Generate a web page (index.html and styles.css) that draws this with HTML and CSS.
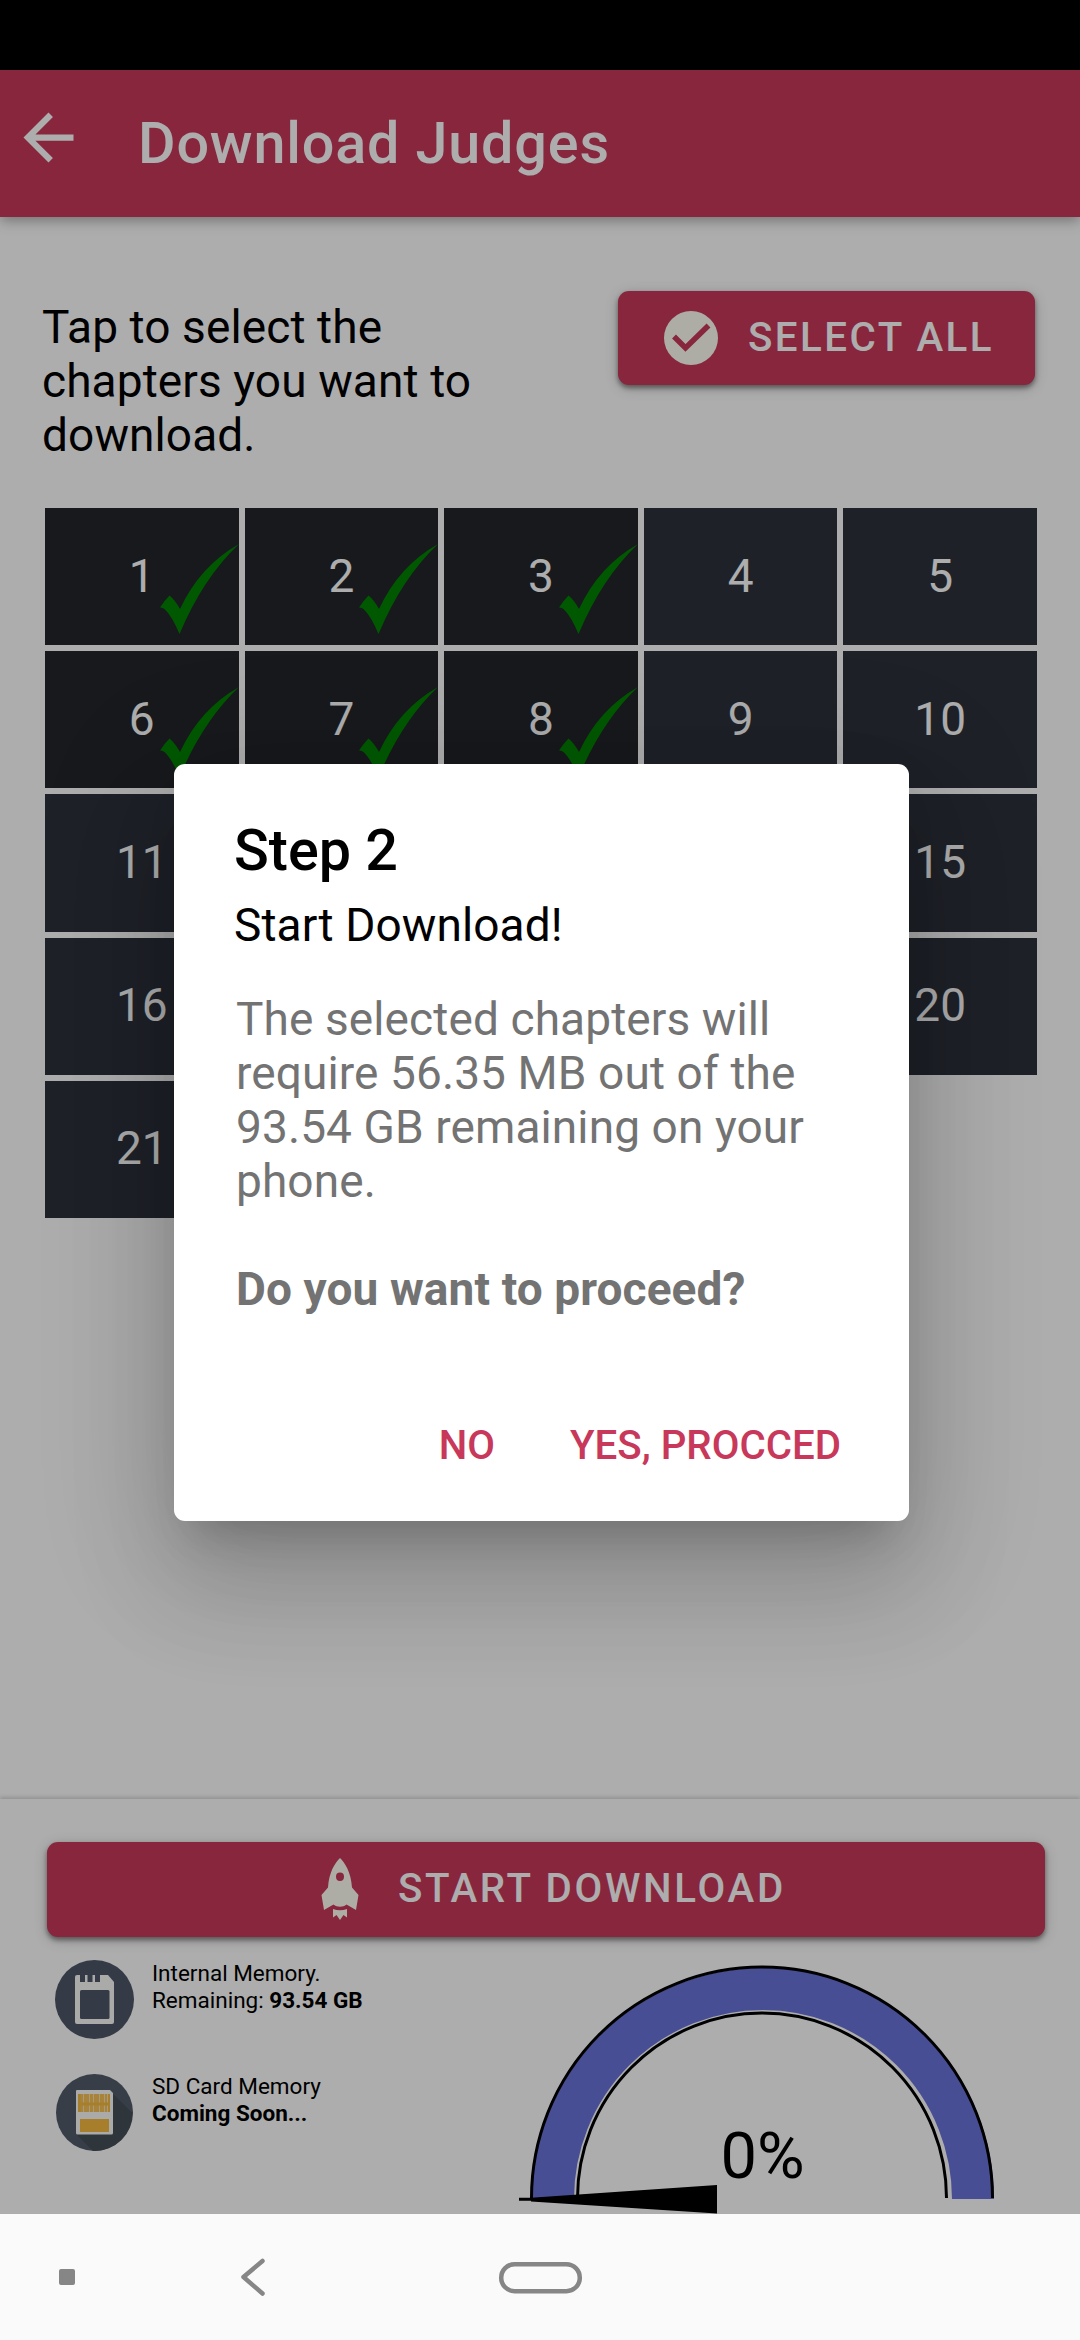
FILE: index.html
```html
<!DOCTYPE html>
<html lang="en">
<head>
<meta charset="utf-8">
<title>Download Judges</title>
<link rel="stylesheet" href="styles.css">
</head>
<body>
<div class="screen">
  <div class="status-bar"></div>
  <div class="app">
    <header class="app-bar">
      <svg class="back-icon" viewBox="0 0 24 24"><path d="M20 11H7.83l5.59-5.59L12 4l-8 8 8 8 1.41-1.41L7.83 13H20v-2z"/></svg>
      <h1 class="app-title">Download Judges</h1>
    </header>

    <main class="content">
      <div class="intro">
        <p class="hint">Tap to select the<br>chapters you want to<br>download.</p>
        <button class="button select-all">
          <svg class="check-circle" viewBox="0 0 54 54"><circle cx="27" cy="27" r="27"/><path class="check-cut" d="M10 25.500L21.500 37 44.500 14.500"/></svg>
          <span>SELECT ALL</span>
        </button>
      </div>

      <div class="chapters">
        <div class="chapter selected">1<svg class="tick" viewBox="0 0 79 90"><use href="#tick"/></svg></div>
        <div class="chapter selected">2<svg class="tick" viewBox="0 0 79 90"><use href="#tick"/></svg></div>
        <div class="chapter selected">3<svg class="tick" viewBox="0 0 79 90"><use href="#tick"/></svg></div>
        <div class="chapter">4</div>
        <div class="chapter">5</div>
        <div class="chapter selected">6<svg class="tick" viewBox="0 0 79 90"><use href="#tick"/></svg></div>
        <div class="chapter selected">7<svg class="tick" viewBox="0 0 79 90"><use href="#tick"/></svg></div>
        <div class="chapter selected">8<svg class="tick" viewBox="0 0 79 90"><use href="#tick"/></svg></div>
        <div class="chapter">9</div>
        <div class="chapter">10</div>
        <div class="chapter">11</div>
        <div class="chapter"></div>
        <div class="chapter"></div>
        <div class="chapter"></div>
        <div class="chapter">15</div>
        <div class="chapter">16</div>
        <div class="chapter"></div>
        <div class="chapter"></div>
        <div class="chapter"></div>
        <div class="chapter">20</div>
        <div class="chapter">21</div>
      </div>
    </main>

    <footer class="footer">
      <button class="button start">
        <svg class="rocket" viewBox="0 0 38 62">
          <path fill-rule="evenodd" d="M19 0C24 5 30 14 31 29.500L37.500 37 35 52 25.500 46.500C22 49.500 16 49.500 12.500 46.500L3 52 .5 37 7 29.500C8 14 14 5 19 0ZM19 14.500A4 4.200 0 1 0 19 22.900A4 4.200 0 1 0 19 14.500Z"/>
          <path d="M12 51Q19 53.500 26 51V59.500L22.500 57 19 62 15.500 57 12 59.500Z"/>
        </svg>
        <span>START DOWNLOAD</span>
      </button>

      <div class="info">
        <div class="storage">
          <div class="storage-row">
            <svg class="storage-icon" viewBox="0 0 79 79">
              <circle class="disc" cx="39.500" cy="39.500" r="39.500"/>
              <path class="card" d="M22 15H53L59 22V62Q59 64 57 64H22Q20 64 20 62V17Q20 15 22 15Z"/>
              <path class="disc" d="M25 15H30V22H25ZM32.500 15H37.500V22H32.500ZM40 15H45V22H40Z"/>
              <rect class="disc" x="25" y="30" width="29.500" height="29" rx="1.500"/>
            </svg>
            <p class="storage-text">Internal Memory.<br>Remaining: <b>93.54 GB</b></p>
          </div>
          <div class="storage-row">
            <svg class="storage-icon" viewBox="0 0 79 79">
              <circle class="disc-sd" cx="39.500" cy="39.500" r="38.500"/>
              <path class="disc-shade" d="M57 20L77.500 40A38.500 38.500 0 0 1 38 78L21 61Z"/>
              <path class="card" d="M22 17H55L58 20V60Q58 61.500 56.500 61.500H22.500Q21 61.500 21 60V18Q21 17 22 17Z"/>
              <path class="gold-light" d="M23 21H55V39H23Z"/>
              <path class="card-lines" d="M28.500 21V39M34.500 21V39M38.500 21V39M44.500 21V39M49.500 21V39M52.500 21V39"/>
              <path class="gold" d="M23 21H25.500V39H23ZM53.500 21H55V39H53.500ZM23 29.500H55V32.500H23ZM25 46H54V59H25Z"/>
            </svg>
            <p class="storage-text">SD Card Memory<br><b>Coming Soon...</b></p>
          </div>
        </div>
        <svg class="gauge" viewBox="519 1960 480 254">
          <path class="gauge-band" d="M553 2199A210 210 0 0 1 973 2199"/>
          <path class="gauge-line" d="M531.500 2198A230.500 231 0 0 1 992.500 2198"/>
          <path class="gauge-line" d="M577.500 2198A184.500 185 0 0 1 946.500 2198"/>
          <path class="gauge-needle" d="M519 2197.800H531L717 2185V2213.500L531 2201.500V2200.700H519Z"/>
          <text class="gauge-value" x="762.500" y="2178" text-anchor="middle">0%</text>
        </svg>
      </div>
    </footer>
    <div class="scrim">
      <section class="dialog" role="dialog">
        <h2 class="dialog-title">Step 2</h2>
        <p class="dialog-subtitle">Start Download!</p>
        <p class="dialog-body">The selected chapters will<br>require 56.35 MB out of the<br>93.54 GB remaining on your<br>phone.<br><br><b>Do you want to proceed?</b></p>
        <div class="dialog-actions"><span>NO</span><span>YES, PROCCED</span></div>
      </section>
    </div>
  </div>

  <nav class="nav-bar">
    <svg viewBox="0 0 1080 126">
      <rect class="nav-fill" x="59" y="55" width="16" height="16" rx="2"/>
      <path class="nav-stroke" d="M262.500 47L243.500 63 262.500 79.500" />
      <rect class="nav-stroke" x="501.200" y="50.200" width="78.600" height="27" rx="13.500"/>
    </svg>
  </nav>
</div>

<svg class="defs"><defs><path id="tick" d="M0 63.500Q5 56 9.500 51.500Q15 56 20 65Q40 22 79 0Q43 34 19.500 90Q12 72 4.500 65Q2 63 0 63.500Z"/></defs></svg>
</body>
</html>
```
FILE: styles.css
```css
* { box-sizing: border-box; }
body, h1, h2, p { margin: 0; }
body { font-family: Roboto, "Noto Sans", sans-serif; color: #000; }

.defs { display: none; }
.screen { width: 1080px; height: 2340px; display: flex; flex-direction: column; overflow: hidden; }
.status-bar { height: 70px; background: #000; }
.app { position: relative; height: 2144px; display: flex; flex-direction: column; background: #fff; overflow: hidden; }

.app-bar { height: 147px; display: flex; align-items: center; padding-left: 11px; background: #c8385b; box-shadow: 0 3px 13px rgba(0, 0, 0, .36); }
.back-icon { width: 75px; height: 75px; margin: 0 52px 12px 0; fill: #fff; }
.app-title { font-size: 57.500px; font-weight: 500; line-height: 67px; letter-spacing: .85px; color: #fff; }

.content { flex: 1; padding: 74px 43px 0 42px; }
.intro { display: flex; justify-content: space-between; height: 217px; }
.hint { padding-top: 9px; font-size: 46px; line-height: 54px; letter-spacing: .1px; }

.button { display: flex; align-items: center; justify-content: flex-start; border: 0; padding: 0; border-radius: 11px; background: #c8385b; color: #fff; font-family: inherit; font-size: 40.250px; font-weight: 500; line-height: 48px; letter-spacing: 2.500px; box-shadow: 0 3px 5px rgba(0, 0, 0, .42), 0 3px 14px rgba(0, 0, 0, .2); }
.button span { margin-bottom: 1px; }
.select-all { width: 417px; height: 94px; margin-right: 2px; padding-left: 46px; gap: 30px; }
.check-circle { width: 54px; height: 54px; fill: #fffff5; }
.check-cut { fill: none; stroke: #c8385b; stroke-width: 5.500; }

.chapters { display: grid; grid-template-columns: repeat(5, 1fr); grid-auto-rows: 137.200px; gap: 6px; margin: 0 0 0 3px; width: 992px; }
.chapter { position: relative; display: flex; align-items: center; justify-content: center; padding-bottom: 2px; background: #2d323c; color: #fff; font-size: 46px; line-height: 54px; }
.selected { background: #23262b; }
.tick { position: absolute; right: 0; top: 36px; width: 79px; height: 90px; fill: #008400; }

.footer { height: 415px; padding: 43px 35px 0 47px; background: #fff; box-shadow: 0 -2px 4px rgba(0, 0, 0, .16); }
.start { width: 998px; height: 95px; gap: 39px; padding-left: 274px; letter-spacing: 2.700px; }
.rocket { width: 38px; height: 62px; margin-bottom: 1px; fill: #fffff5; }
.info { display: flex; justify-content: space-between; padding: 23px 46px 0 8px; }
.storage { display: flex; flex-direction: column; gap: 34px; }
.storage-row { display: flex; gap: 18px; height: 79px; }
.storage-icon { width: 79px; height: 79px; }
.storage-text { font-size: 22.500px; line-height: 27px; }
.disc { fill: #4e5767; }
.disc-sd { fill: #525c69; }
.disc-shade { fill: #444e57; }
.card { fill: #fbfbf8; }
.gold { fill: #f6bb42; }
.gold-light { fill: #f6c356; }
.card-lines { fill: none; stroke: #fff; stroke-opacity: .55; stroke-width: 1; }
.gauge { width: 480px; height: 254px; }
.gauge-band { fill: none; stroke: #6a73da; stroke-width: 42; }
.gauge-line { fill: none; stroke: #000; stroke-width: 3; }
.gauge-value { font-size: 65px; }

.scrim { position: absolute; inset: 0; padding: 694px 0 0 174px; background: rgba(0, 0, 0, .32); }
.dialog { width: 735px; height: 757px; padding: 54px 62px 0 60px; border-radius: 11px; background: #fff; box-shadow: 0 66px 104px 8px rgba(0, 0, 0, .12), 0 28px 41px -19px rgba(0, 0, 0, .2), 0 24px 126px 22px rgba(0, 0, 0, .12); }
.dialog-title { font-size: 57.500px; font-weight: 500; line-height: 66px; }
.dialog-subtitle { margin-top: 14px; font-size: 46px; line-height: 54px; letter-spacing: .1px; }
.dialog-body { margin: 40px 0 0 2px; font-size: 46px; line-height: 54px; letter-spacing: .1px; color: #737373; }
.dialog-actions { display: flex; justify-content: flex-end; gap: 75px; margin-top: 106px; padding-right: 6px; font-size: 40.250px; font-weight: 500; line-height: 48px; color: #c8385b; }

.nav-bar { height: 126px; background: #fafafa; }
.nav-bar svg { display: block; width: 1080px; height: 126px; }
.nav-fill { fill: #868686; }
.nav-stroke { fill: none; stroke: #868686; stroke-width: 4.500; stroke-linecap: round; stroke-linejoin: round; }
```
